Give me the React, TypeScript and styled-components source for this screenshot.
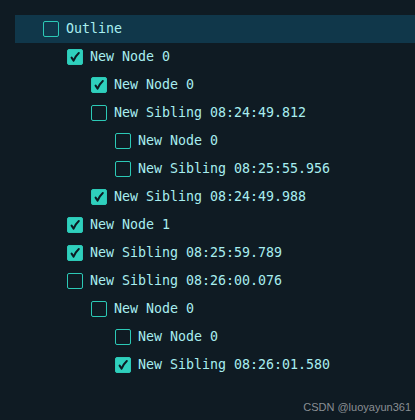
import styled, { createGlobalStyle } from "styled-components";

const GlobalStyle = createGlobalStyle`
  html, body {
    margin: 0;
    padding: 0;
    background: #0f1b23;
  }
`;

const Page = styled.div`
  position: relative;
  width: 415px;
  height: 420px;
  background: #0f1b23;
  padding: 15px 0 0 15px;
  box-sizing: border-box;
  font-family: "DejaVu Sans Mono", "Liberation Mono", monospace;
`;

const Tree = styled.ul`
  list-style: none;
  margin: 0;
  padding: 0;
`;

const Row = styled.li<{ level: number; active?: boolean }>`
  display: flex;
  align-items: center;
  gap: 7px;
  height: 28px;
  padding-left: ${({ level }) => 28 + level * 24}px;
  background: ${({ active }) => (active ? "#10374a" : "transparent")};
  cursor: pointer;
`;

const Box = styled.span<{ checked: boolean }>`
  width: 16px;
  height: 16px;
  box-sizing: border-box;
  display: flex;
  align-items: center;
  justify-content: center;
  border: 1.5px solid #2cc9b6;
  border-radius: 2px;
  background: ${({ checked }) => (checked ? "#2fd0bd" : "transparent")};
`;

const Label = styled.span`
  color: #a8eef0;
  font-size: 13.3px;
  line-height: 28px;
  white-space: pre;
`;

const Watermark = styled.span`
  position: absolute;
  right: 4px;
  bottom: 7px;
  font-family: "Liberation Sans", Arial, sans-serif;
  font-size: 11px;
  color: #8a8f93;
`;

const Check = () => (
  <svg width="12" height="12" viewBox="0 0 12 12">
    <path
      d="M2.6 6.6 L4.6 9.6 Q7 4.5 9.8 2"
      fill="none"
      stroke="#0c1a22"
      strokeWidth="2"
      strokeLinecap="round"
      strokeLinejoin="round"
    />
  </svg>
);

const items = [
  { level: 0, name: "Outline", checked: false, active: true },
  { level: 1, name: "New Node 0", checked: true },
  { level: 2, name: "New Node 0", checked: true },
  { level: 2, name: "New Sibling 08:24:49.812", checked: false },
  { level: 3, name: "New Node 0", checked: false },
  { level: 3, name: "New Sibling 08:25:55.956", checked: false },
  { level: 2, name: "New Sibling 08:24:49.988", checked: true },
  { level: 1, name: "New Node 1", checked: true },
  { level: 1, name: "New Sibling 08:25:59.789", checked: true },
  { level: 1, name: "New Sibling 08:26:00.076", checked: false },
  { level: 2, name: "New Node 0", checked: false },
  { level: 3, name: "New Node 0", checked: false },
  { level: 3, name: "New Sibling 08:26:01.580", checked: true },
];

export default function App() {
  return (
    <Page>
      <GlobalStyle />
      <Tree>
        {items.map((it, i) => (
          <Row key={i} level={it.level} active={it.active}>
            <Box checked={it.checked}>{it.checked && <Check />}</Box>
            <Label>{it.name}</Label>
          </Row>
        ))}
      </Tree>
      <Watermark>CSDN @luoyayun361</Watermark>
    </Page>
  );
}
